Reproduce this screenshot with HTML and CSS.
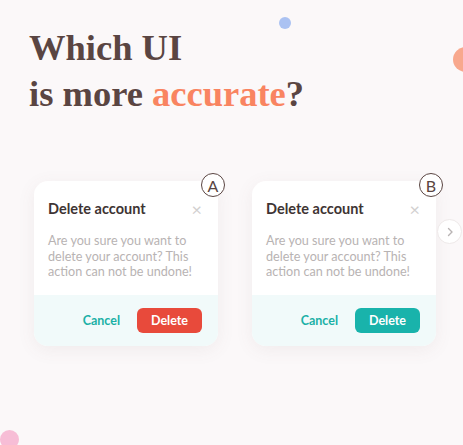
FILE: index.html
```html
<!DOCTYPE html>
<html lang="en">
<head>
  <meta charset="UTF-8">
  <meta name="viewport" content="width=device-width, initial-scale=1.0">
  <title>Which UI is more accurate?</title>
  <link rel="stylesheet" href="styles.css">
</head>
<body>
  <div class="page">
    <span class="dot dot-blue"></span>
    <span class="dot dot-coral"></span>
    <span class="dot dot-pink"></span>

    <h1 class="title">Which UI<br>is more <span class="accent">accurate</span>?</h1>

    <div class="cards">
      <div class="card">
        <span class="badge">A</span>
        <div class="card-body">
          <div class="card-head">
            <h2>Delete account</h2>
            <span class="close">&times;</span>
          </div>
          <p>Are you sure you want to delete your account? This action can not be undone!</p>
        </div>
        <div class="card-foot">
          <button class="btn-cancel">Cancel</button>
          <button class="btn-delete red">Delete</button>
        </div>
      </div>

      <div class="card">
        <span class="badge">B</span>
        <div class="card-body">
          <div class="card-head">
            <h2>Delete account</h2>
            <span class="close">&times;</span>
          </div>
          <p>Are you sure you want to delete your account? This action can not be undone!</p>
        </div>
        <div class="card-foot">
          <button class="btn-cancel">Cancel</button>
          <button class="btn-delete teal">Delete</button>
        </div>
      </div>
    </div>

    <span class="next">
      <svg width="10" height="10" viewBox="0 0 10 10"><path d="M3.5 1.5 L7 5 L3.5 8.5" fill="none" stroke="#b9b4b4" stroke-width="1.4" stroke-linecap="round" stroke-linejoin="round"/></svg>
    </span>
  </div>
</body>
</html>
```

FILE: styles.css
```css
body {
  margin: 0;
  background-color: #fbf8f9;
  font-family: Lato, "Noto Sans", sans-serif;
}

.page {
  position: relative;
  width: 463px;
  height: 445px;
  overflow: hidden;
}

.dot {
  position: absolute;
  border-radius: 50%;
}

.dot-blue {
  left: 279px;
  top: 17px;
  width: 12px;
  height: 12px;
  background-color: #abc2f2;
}

.dot-coral {
  left: 453px;
  top: 47px;
  width: 25px;
  height: 25px;
  background-color: #f8a88d;
}

.dot-pink {
  left: 0;
  top: 430px;
  width: 19px;
  height: 19px;
  background-color: #f7bdd6;
}

.title {
  margin: 0;
  padding: 25px 0 0 29px;
  font-family: "Liberation Serif", serif;
  font-size: 36.5px;
  line-height: 46px;
  font-weight: bold;
  color: #5a4542;
}

.accent {
  color: #f98461;
}

.cards {
  display: flex;
  gap: 34px;
  padding: 64px 0 0 34px;
}

.card {
  position: relative;
  width: 184px;
  background-color: #fff;
  border-radius: 14px;
  box-shadow: 0 4px 18px rgba(120, 90, 90, 0.08);
}

.badge {
  position: absolute;
  right: -7px;
  top: -8px;
  width: 22px;
  height: 22px;
  border: 1.5px solid #5a4542;
  border-radius: 50%;
  background-color: #fff;
  display: flex;
  align-items: center;
  justify-content: center;
  font-size: 16px;
  color: #5a4542;
}

.card-body {
  padding: 18px 14px 0 14px;
  height: 96px;
}

.card-head {
  display: flex;
  justify-content: space-between;
  align-items: center;
}

.card-head h2 {
  margin: 0;
  font-size: 14.5px;
  line-height: 20px;
  font-weight: bold;
  color: #3e3433;
}

.close {
  font-size: 18px;
  line-height: 20px;
  color: #d2d0d0;
  margin-right: 2px;
}

.card-body p {
  margin: 14px 0 0 0;
  font-size: 12.6px;
  line-height: 15.5px;
  color: #b8b3b3;
}

.card-foot {
  display: flex;
  justify-content: flex-end;
  align-items: center;
  gap: 17px;
  height: 51px;
  padding-right: 16px;
  background-color: #f1fafa;
  border-radius: 0 0 14px 14px;
}

.card-foot button {
  border: none;
  font-family: Lato, "Noto Sans", sans-serif;
  font-size: 12.5px;
  font-weight: bold;
  cursor: pointer;
}

.btn-cancel {
  background: none;
  color: #1bb0a6;
  padding: 0;
}

.btn-delete {
  width: 65px;
  height: 25px;
  border-radius: 6px;
  color: #fff;
}

.btn-delete.red {
  background-color: #e84a3b;
}

.btn-delete.teal {
  background-color: #19b3ab;
}

.next {
  position: absolute;
  left: 437px;
  top: 219px;
  width: 23px;
  height: 23px;
  border-radius: 50%;
  background-color: #fff;
  border: 1px solid #eee9e9;
  display: flex;
  align-items: center;
  justify-content: center;
}
```
